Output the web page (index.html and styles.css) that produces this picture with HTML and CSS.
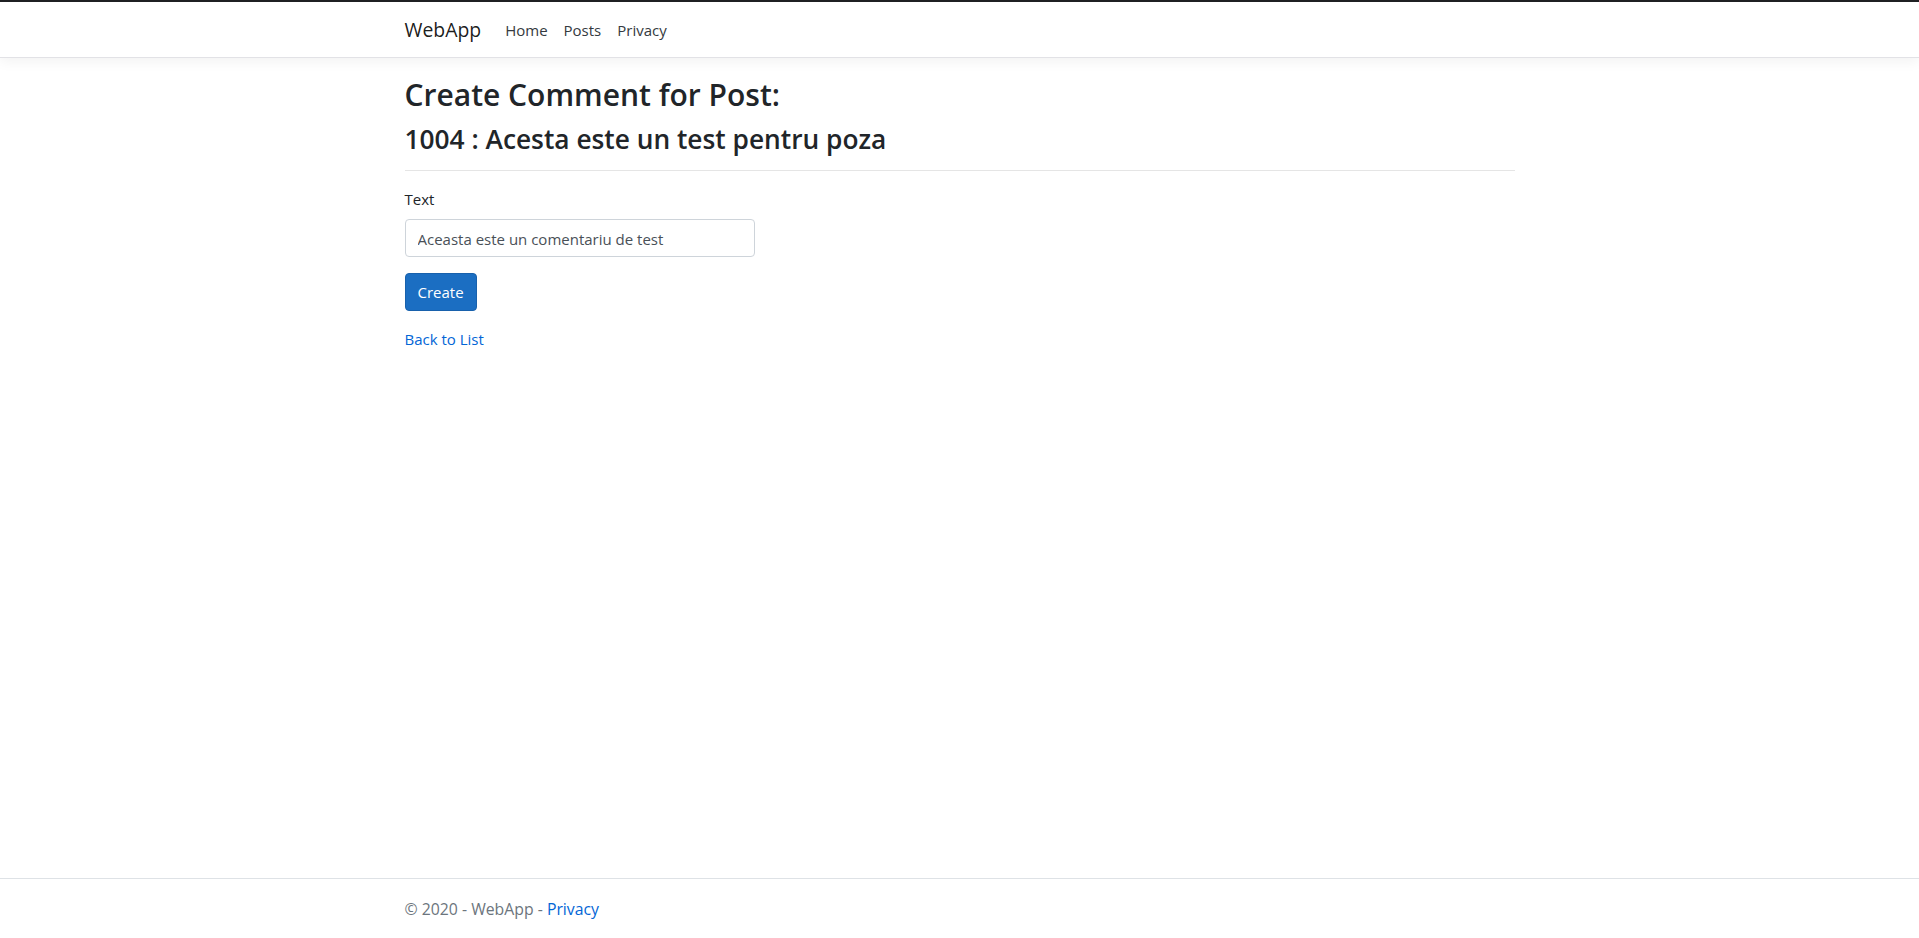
FILE: index.html
```html
<!DOCTYPE html>
<html lang="en">
<head>
<meta charset="utf-8">
<title>Create - WebApp</title>
<link rel="stylesheet" href="styles.css">
</head>
<body>
<header class="site-header">
  <nav class="navbar">
    <div class="container navbar-inner">
      <a class="navbar-brand" href="#">WebApp</a>
      <ul class="nav-list">
        <li><a class="nav-link" href="#">Home</a></li>
        <li><a class="nav-link" href="#">Posts</a></li>
        <li><a class="nav-link" href="#">Privacy</a></li>
      </ul>
    </div>
  </nav>
</header>
<div class="container main">
  <main>
    <h2 class="title">Create Comment for Post:</h2>
    <h3 class="subtitle">1004 : Acesta este un test pentru poza</h3>
    <hr class="divider">
    <div class="form-col">
      <form>
        <div class="form-group">
          <label class="control-label" for="Text">Text</label>
          <input class="form-control" id="Text" type="text" value="Aceasta este un comentariu de test">
        </div>
        <div class="form-group">
          <button type="submit" class="btn">Create</button>
        </div>
      </form>
    </div>
    <div class="back">
      <a class="link" href="#">Back to List</a>
    </div>
  </main>
</div>
<footer class="footer">
  <div class="container footer-inner">&copy; 2020 - WebApp - <a class="link" href="#">Privacy</a></div>
</footer>
</body>
</html>
```
FILE: styles.css
```css
html { height: 100%; }
* { box-sizing: border-box; }
body {
  margin: 0;
  min-height: 100vh;
  display: flex;
  flex-direction: column;
  font-family: "Open Sans", "Noto Sans", sans-serif;
  font-size: 15px;
  line-height: 24px;
  color: #212529;
  background: #fff;
}
a { text-decoration: none; }
.container {
  width: 100%;
  max-width: 1140px;
  margin: 0 auto;
  padding: 0 15px;
}
.site-header {
  border-top: 2px solid #202124;
}
.navbar {
  background: #fff;
  border-bottom: 1px solid #e2e2e6;
  box-shadow: 0 4px 12px rgba(0, 0, 0, 0.05);
  padding: 8px 0 7px;
}
.navbar-inner {
  display: flex;
  align-items: center;
}
.navbar-brand {
  font-size: 19.4px;
  line-height: 30px;
  padding: 5px 0;
  margin-right: 16px;
  color: rgba(0, 0, 0, 0.9);
}
.nav-list {
  display: flex;
  list-style: none;
  margin: 0;
  padding: 0;
}
.nav-link {
  display: block;
  padding: 8px;
  font-size: 15px;
  line-height: 24px;
  color: #343a40;
}
.main {
  flex: 1 0 auto;
  padding-top: 19.4px;
  padding-bottom: 16px;
}
.title {
  margin: 0 0 9.7px;
  font-size: 30px;
  line-height: 36px;
  font-weight: 600;
}
.subtitle {
  margin: 0;
  font-size: 26.3px;
  line-height: 32px;
  font-weight: 600;
}
.divider {
  margin: 15px 0 16px;
  border: 0;
  border-top: 1px solid rgba(0, 0, 0, 0.1);
  height: 0;
}
.form-col { width: 350px; }
form { margin: 0; }
.form-group { margin-bottom: 16px; }
.control-label {
  display: inline-block;
  margin-bottom: 8px;
}
.form-control {
  display: block;
  width: 100%;
  height: 38px;
  padding: 7px 12px 5px;
  font-family: inherit;
  font-size: 15px;
  line-height: 24px;
  color: #495057;
  background: #fff;
  border: 1px solid #ced4da;
  border-radius: 4px;
  margin: 0;
}
.btn {
  display: inline-block;
  height: 38px;
  padding: 6px 12px;
  font-family: inherit;
  font-size: 15px;
  line-height: 24px;
  color: #fff;
  background: #1b6ec2;
  border: 1px solid #1861ac;
  border-radius: 4px;
  margin: 0;
  cursor: pointer;
}
.link { color: #0366d6; }
.footer {
  flex-shrink: 0;
  height: 60px;
  padding-top: 1px;
  border-top: 1px solid #dee2e6;
  line-height: 58px;
  font-size: 15.8px;
  color: #6c757d;
  white-space: nowrap;
}
```
